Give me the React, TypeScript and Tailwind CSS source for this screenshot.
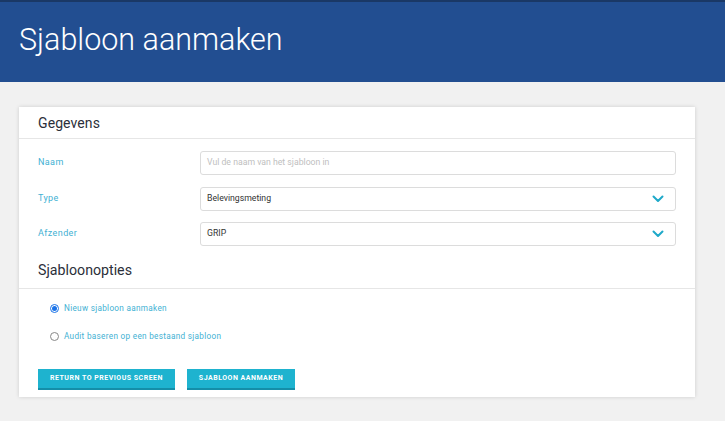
import React from "react";

function Chevron() {
  return (
    <svg width="12" height="8" viewBox="0 0 12 8" className="shrink-0">
      <path d="M1.5 1.5 L6 6 L10.5 1.5" fill="none" stroke="#1fa9c9" strokeWidth="2" strokeLinecap="round" strokeLinejoin="round" />
    </svg>
  );
}

function Row({ label, children }: { label: string; children: React.ReactNode }) {
  return (
    <div className="flex items-center h-[24px]">
      <div className="w-[181px] pl-[19px] text-[9px] text-[#3fb1d3] tracking-[0.4px]">{label}</div>
      <div className="flex-1 mr-[19px]">{children}</div>
    </div>
  );
}

export default function App() {
  return (
    <div className="min-h-[421px] bg-[#f1f1f1]" style={{ fontFamily: "Roboto, 'Noto Sans', sans-serif" }}>
      <div className="h-[82px] bg-[#224e91] border-t-2 border-[#1a3866] flex items-center pl-[19px]">
        <h1 className="text-[30.5px] font-light text-white leading-none -mt-[4px]">Sjabloon aanmaken</h1>
      </div>
      <div className="pt-[25px] pl-[19px] pr-[30px]">
        <div className="bg-white shadow-[0_0_4px_rgba(0,0,0,0.15)] pb-[7px]">
          <div className="h-[32px] border-b border-[#e6e6e6] flex items-center pl-[19px]">
            <h2 className="text-[14px] text-[#2b2f3a] leading-none tracking-[0.1px]">Gegevens</h2>
          </div>
          <div className="pt-[12px] flex flex-col gap-[11.5px]">
            <Row label="Naam">
              <div className="h-[24px] border border-[#dcdcdc] rounded-[3px] flex items-center px-[6px] text-[8.7px] text-[#c0c0c0]">
                Vul de naam van het sjabloon in
              </div>
            </Row>
            <Row label="Type">
              <div className="h-[24px] border border-[#dcdcdc] rounded-[3px] flex items-center justify-between pl-[6px] pr-[11px] text-[8.7px] text-[#333]">
                <span>Belevingsmeting</span>
                <Chevron />
              </div>
            </Row>
            <Row label="Afzender">
              <div className="h-[24px] border border-[#dcdcdc] rounded-[3px] flex items-center justify-between pl-[6px] pr-[11px] text-[8.7px] text-[#333]">
                <span>GRIP</span>
                <Chevron />
              </div>
            </Row>
          </div>
          <div className="mt-[16px] h-[27px] border-b border-[#e6e6e6] pt-[1px] pl-[19px]">
            <h2 className="text-[14.2px] text-[#2b2f3a] leading-none">Sjabloonopties</h2>
          </div>
          <div className="pl-[31px] pt-[14px] flex flex-col gap-[18px]">
            <label className="flex items-center gap-[5px] text-[8.2px] text-[#3fb1d3] tracking-[0.3px] h-[10px]">
              <span className="w-[9px] h-[9px] rounded-full border border-[#1a73e8] flex items-center justify-center">
                <span className="w-[5px] h-[5px] rounded-full bg-[#1a73e8]" />
              </span>
              Nieuw sjabloon aanmaken
            </label>
            <label className="flex items-center gap-[5px] text-[8.2px] text-[#3fb1d3] tracking-[0.3px] h-[10px]">
              <span className="w-[9px] h-[9px] rounded-full border border-[#888]" />
              Audit baseren op een bestaand sjabloon
            </label>
          </div>
          <div className="pl-[19px] pt-[28px] flex gap-[12px]">
            <button className="h-[21px] w-[137px] bg-[#1eb3cf] border-b-2 border-[#148ea8] text-white text-[7px] font-bold tracking-[0.5px] uppercase">
              Return to previous screen
            </button>
            <button className="h-[21px] w-[108px] bg-[#1eb3cf] border-b-2 border-[#148ea8] text-white text-[7px] font-bold tracking-[0.5px] uppercase">
              Sjabloon aanmaken
            </button>
          </div>
        </div>
      </div>
    </div>
  );
}
